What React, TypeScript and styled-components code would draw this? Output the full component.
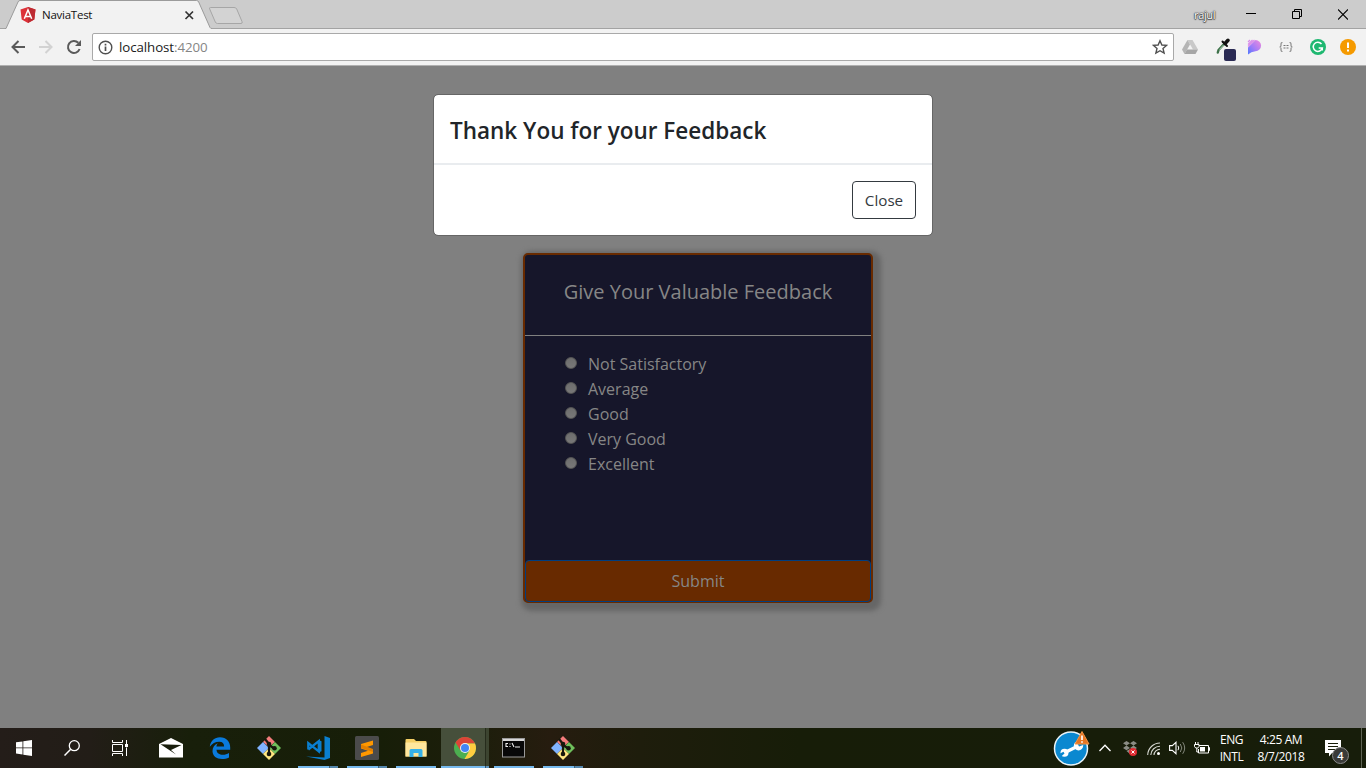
import React from 'react';
import styled, { createGlobalStyle } from 'styled-components';

const GlobalStyle = createGlobalStyle`
  * { box-sizing: border-box; }
  body { margin: 0; overflow: hidden; font-family: "Open Sans", "Noto Sans", sans-serif; }
`;

const Screen = styled.div`
  width: 1366px;
  height: 768px;
  display: flex;
  flex-direction: column;
  overflow: hidden;
`;

/* ---------- browser chrome ---------- */
const TabStrip = styled.div`
  height: 29px;
  flex: none;
  display: flex;
  background: #cccccc;
  box-shadow: inset 0 -1px #a3a3a3;
`;
const Tab = styled.div`
  position: relative;
  width: 206px;
  height: 29px;
  margin-left: 5px;
  padding-left: 15px;
  display: flex;
  align-items: center;
`;
const TabShape = styled.svg`
  position: absolute;
  left: 0;
  top: 0;
`;
const TabIcon = styled.svg`
  position: relative;
  flex: none;
`;
const TabTitle = styled.span`
  position: relative;
  width: 142px;
  margin-left: 6px;
  font-size: 11.5px;
  line-height: 29px;
  letter-spacing: -0.25px;
  color: #111;
`;
const NewTab = styled.svg`
  flex: none;
  margin: 6px 0 0 -3px;
`;
const WindowControls = styled.div`
  margin-left: auto;
  display: flex;
  align-items: center;
  height: 28px;
`;
const UserName = styled.span`
  width: 24px;
  margin-right: 10px;
  font-size: 11px;
  letter-spacing: -0.35px;
  color: #fff;
  text-shadow: 0 0 1px #333, 0 0 1px #333, 0 0 2px #444, 0 1px 1px #555;
`;
const ControlButton = styled.span`
  width: 46px;
  height: 28px;
  display: flex;
  align-items: center;
  justify-content: center;
`;
const Toolbar = styled.div`
  height: 37px;
  flex: none;
  display: flex;
  align-items: center;
  padding: 0 0 0 4px;
  background: #f2f2f2;
  border-bottom: 1px solid #b0b0b0;
`;
const NavButton = styled.span`
  width: 28px;
  flex: none;
  display: flex;
  justify-content: center;
`;
const AddressBar = styled.div`
  width: 1082px;
  height: 28px;
  flex: none;
  margin-left: 4px;
  padding: 0 5px;
  display: flex;
  align-items: center;
  background: #fff;
  border: 1px solid #a9a9a9;
  border-radius: 2px;
`;
const Url = styled.span`
  flex: 1;
  margin-left: 6px;
  font-size: 13.3px;
  letter-spacing: -0.08px;
  line-height: 26px;
  color: #1b1b1b;
`;
const Port = styled.span`
  color: #858585;
`;
const Extensions = styled.div`
  display: flex;
  flex: none;
`;
const Extension = styled.span<{ $w?: number }>`
  width: ${(p) => p.$w ?? 32}px;
  height: 26px;
  flex: none;
  display: flex;
  align-items: center;
  justify-content: center;
`;

/* ---------- page ---------- */
const Page = styled.main`
  position: relative;
  height: 662px;
  flex: none;
  padding: 187px 0 0 523px;
  background: #808080;
`;
const Card = styled.section`
  width: 350px;
  height: 350px;
  display: flex;
  flex-direction: column;
  background: #16162a;
  border: 2px solid #682a00;
  border-radius: 5px;
  box-shadow: 3px 3px 5px 5px #666;
  color: #868686;
`;
const CardTitle = styled.h2`
  height: 81px;
  margin: 0;
  padding-top: 22px;
  font-size: 20px;
  font-weight: 400;
  line-height: 30px;
  text-align: center;
  border-bottom: 1px solid #808080;
`;
const Options = styled.div`
  flex: 1;
  padding: 16px 0 0 40px;
`;
const Option = styled.label`
  display: flex;
  align-items: center;
  height: 25px;
  font-size: 16px;
  line-height: 25px;
`;
const Radio = styled.span`
  width: 12px;
  height: 12px;
  margin: 0 11px 3px 0;
  border-radius: 50%;
  border: 1px solid #555;
  background: linear-gradient(#6d6d6d, #787878);
`;
const Submit = styled.button`
  height: 42px;
  flex: none;
  margin-bottom: -1px;
  padding: 0;
  border: 1px solid #003e80;
  border-radius: 4px;
  background: #682a00;
  color: #868686;
  font: 400 16px/40px "Open Sans", sans-serif;
`;
const Modal = styled.div`
  position: absolute;
  left: 433px;
  top: 28px;
  width: 500px;
  height: 142px;
  border: 1px solid #666;
  border-radius: 5px;
  background: #fff;
  background-clip: padding-box;
`;
const ModalHeader = styled.header`
  height: 69px;
  padding: 17px 16px 15px;
  border-bottom: 1px solid #e9ecef;
`;
const ModalTitle = styled.h4`
  margin: 0;
  font-size: 22.5px;
  line-height: 37px;
  font-weight: 600;
  color: #212529;
  white-space: nowrap;
`;
const ModalFooter = styled.footer`
  height: 71px;
  padding: 16px;
  display: flex;
  justify-content: flex-end;
  border-top: 1px solid #e9ecef;
`;
const CloseButton = styled.button`
  width: 64px;
  height: 38px;
  padding: 0;
  border: 1px solid #343a40;
  border-radius: 4px;
  background: #fff;
  color: #343a40;
  font: 400 15.2px/36px "Open Sans", sans-serif;
`;

/* ---------- taskbar ---------- */
const Taskbar = styled.footer`
  height: 40px;
  flex: none;
  display: flex;
  background: linear-gradient(90deg, #241d19 0, #221d17 90px, #181f0a 190px, #171e08 380px, #1d1e0b 480px, #261c0f 550px, #1e1d0c 640px, #171d08 800px, #171d0a 1366px);
`;
const TaskSlot = styled.div<{ $w?: number; $active?: boolean }>`
  width: ${(p) => p.$w ?? 49}px;
  height: 40px;
  display: flex;
  flex-direction: column;
  align-items: center;
  justify-content: space-between;
  background: ${(p) => (p.$active ? 'linear-gradient(90deg, transparent 1px, #464f3b 1px, #464f3b 45px, #262c1c 45px, #262c1c 46px, #3c4430 46px)' : 'none')};
`;
const TaskIcon = styled.span`
  height: 38px;
  padding-top: 2px;
  display: flex;
  align-items: center;
  justify-content: center;
`;
const Running = styled.span<{ $split?: boolean; $wide?: boolean }>`
  width: ${(p) => (p.$wide ? 49 : 40)}px;
  height: 2px;
  background: ${(p) =>
    p.$wide
      ? 'linear-gradient(90deg, transparent 1px, #76b9ed 1px, #76b9ed 45px, #35556c 45px, #35556c 46px, #5f95bf 46px)'
      : p.$split
        ? 'linear-gradient(90deg, #76b9ed 31px, #3d6077 31px, #3d6077 32px, #5587ad 32px)'
        : '#76b9ed'};
`;
const PinnedApps = styled.div`
  display: flex;
  margin-left: 2px;
`;
const Tray = styled.div`
  margin-left: auto;
  display: flex;
  align-items: center;
  color: #fff;
`;
const TrayIcon = styled.span<{ $w: number }>`
  width: ${(p) => p.$w}px;
  height: 40px;
  display: flex;
  align-items: center;
  justify-content: center;
`;
const TrayText = styled.div<{ $w: number; $ls: number }>`
  width: ${(p) => p.$w}px;
  font-size: 12px;
  line-height: 17px;
  padding-bottom: 1px;
  text-align: center;
  white-space: nowrap;
  letter-spacing: ${(p) => p.$ls}px;
`;
const ShowDesktop = styled.span`
  width: 5px;
  height: 40px;
  border-left: 1px solid #5e6353;
`;
const Notifications = styled.div`
  position: relative;
  width: 24px;
  height: 40px;
  margin: 0 12px 0 10px;
  padding-top: 12px;
`;
const Badge = styled.span`
  position: absolute;
  left: 7px;
  top: 19px;
  width: 17px;
  height: 17px;
  border: 1px solid #8b8b8b;
  border-radius: 50%;
  background: #3a3b38;
  font-size: 11px;
  line-height: 15px;
  font-weight: 600;
  text-align: center;
`;

const GitIcon = () => (
  <svg width="26" height="26" viewBox="0 0 26 26">
    <path d="M13 1l6 6-6 5-6-5z" fill="#f47c7c" />
    <path d="M7 7l6 6-6 6-6-6z" fill="#80b3ff" />
    <path d="M19 7l6 6-6 6-6-6z" fill="#6fc05c" />
    <path d="M13 13l6 6-6 6-6-6z" fill="#ffe680" />
    <path d="M9 4l4 5v11M13 10l6 4" stroke="#17170d" strokeWidth="2.2" fill="none" />
    <circle cx="13" cy="9" r="2.3" fill="#17170d" />
    <circle cx="13" cy="19" r="2.3" fill="#17170d" />
    <circle cx="18.5" cy="13.3" r="2.3" fill="#17170d" />
  </svg>
);

const options = ['Not Satisfactory', 'Average', 'Good', 'Very Good', 'Excellent'];

export default function App() {
  return (
    <Screen>
      <GlobalStyle />
      <TabStrip>
        <Tab>
          <TabShape width="208" height="29">
            <path d="M0 29L1 28.5 13 2Q13.6.5 15 .5H191.5Q193 .5 193.700 2L205 27.500Q205.500 28.500 207 28.500V29Z" fill="#f2f2f2" />
            <path d="M0 28.500H1L13 2Q13.600.5 15 .5H191.500Q193 .5 193.700 2L205 27.500Q205.500 28.500 207 28.500" fill="none" stroke="#9b9b9b" />
          </TabShape>
          <TabIcon width="16" height="18" viewBox="0 0 16 18">
            <path d="M8 1l7.500 2.600-1.200 10L8 17l-6.300-3.400-1.200-10z" fill="#dd3138" />
            <path d="M8 1l7.500 2.600-1.200 10L8 17z" fill="#bd2a31" />
            <path d="M4.300 12.800L8 4l3.700 8.800M5.700 10.500h4.600" fill="none" stroke="#fff" strokeWidth="1.500" />
          </TabIcon>
          <TabTitle>NaviaTest</TabTitle>
          <TabIcon width="10" height="10" viewBox="0 0 10 10">
            <path d="M1.500 1.500l7.500 7.500M9 1.500L1.500 9" stroke="#333" strokeWidth="1.700" />
          </TabIcon>
        </Tab>
        <NewTab width="36" height="20">
          <path d="M1.700 3Q1 1.500 2.500 1.500H26Q28 1.500 28.700 3L34 15.500Q34.800 17.500 33 17.500H9.500Q8 17.500 7.300 16Z" fill="#d3d3d3" stroke="#a6a6a6" />
        </NewTab>
        <WindowControls>
          <UserName>rajul</UserName>
          <ControlButton>
            <svg width="10" height="10"><path d="M0 4.500h10" stroke="#000" /></svg>
          </ControlButton>
          <ControlButton>
            <svg width="10" height="10"><path d="M.5 2.500h7v7h-7zM2.500 2.500v-2h7v7h-2" fill="none" stroke="#000" /></svg>
          </ControlButton>
          <ControlButton>
            <svg width="10" height="11"><path d="M0 .5l10 10M10 .5l-10 10" stroke="#000" strokeWidth="1.100" /></svg>
          </ControlButton>
        </WindowControls>
      </TabStrip>

      <Toolbar>
        <NavButton>
          <svg width="14" height="14" viewBox="0 0 14 14"><path d="M14 7H1.500M7.500 1L1.500 7l6 6" fill="none" stroke="#5a5a5a" strokeWidth="2" /></svg>
        </NavButton>
        <NavButton>
          <svg width="14" height="14" viewBox="0 0 14 14"><path d="M0 7h12.500M6.500 1l6 6-6 6" fill="none" stroke="#d2d2d2" strokeWidth="2" /></svg>
        </NavButton>
        <NavButton>
          <svg width="16" height="16" viewBox="0 0 16 16">
            <path d="M13.600 10A6 6 0 1 1 12.300 3.800" fill="none" stroke="#5a5a5a" strokeWidth="2" />
            <path d="M15 1v6H9z" fill="#5a5a5a" />
          </svg>
        </NavButton>
        <AddressBar>
          <svg width="15" height="15" viewBox="0 0 15 15">
            <circle cx="7.500" cy="7.500" r="6.300" fill="none" stroke="#505050" strokeWidth="1.400" />
            <path d="M7.500 6.500V11M7.500 3.700v1.700" stroke="#505050" strokeWidth="1.700" />
          </svg>
          <Url>localhost<Port>:4200</Port></Url>
          <svg width="16" height="16" viewBox="0 0 16 16">
            <path d="M8 1.700l1.900 4.300 4.600.4-3.500 3.100 1.100 4.600L8 11.700l-4.100 2.400L5 9.500 1.500 6.400 6.100 6z" fill="none" stroke="#505050" strokeWidth="1.400" />
          </svg>
        </AddressBar>
        <Extensions>
          <Extension>
            <svg width="16" height="14" viewBox="0 0 16 14">
              <path d="M5.500 0h5L16 9.500h-5z" fill="#c9c9c9" />
              <path d="M5.500 0L0 9.500 2.500 14 8 4.500z" fill="#b5b5b5" />
              <path d="M5 9.500h11L13.500 14h-11z" fill="#a6a6a6" />
            </svg>
          </Extension>
          <Extension>
            <svg width="28" height="28" viewBox="0 0 28 28">
              <path d="M9.800 19.500L10.500 17 16.500 10.500" stroke="#3d7149" strokeWidth="2.400" strokeLinecap="round" fill="none" />
              <path d="M11.500 16.500L16 11.500" stroke="#a9cfae" strokeWidth=".9" />
              <path d="M14.500 8.500l4.500 4.500" stroke="#111" strokeWidth="2" strokeLinecap="round" />
              <path d="M17 10.500L20 7.300" stroke="#111" strokeWidth="3.600" strokeLinecap="round" />
              <rect x="16" y="16" width="12" height="12" rx="2" fill="#2b2b54" />
            </svg>
          </Extension>
          <Extension>
            <svg width="15" height="16" viewBox="0 0 15 16">
              <defs><linearGradient id="violet" x1="0" y1="1" x2="1" y2="0"><stop stopColor="#4f79ff" /><stop offset=".45" stopColor="#a47cf7" /><stop offset="1" stopColor="#f18bdc" /></linearGradient></defs>
              <path d="M1 8.500L8.500 1A5.600 5.600 0 0 1 8.500 12.200Q4 12.500 1 15.500z" fill="url(#violet)" />
              <path d="M1 3L3 1M1 5.500L5.500 1M1 7.500L7.500 1" stroke="#d98bea" strokeWidth="1.200" />
            </svg>
          </Extension>
          <Extension>
            <svg width="14" height="10" viewBox="0 0 14 10">
              <path d="M3.500.5Q2 .5 2 2v1.500Q2 5 .5 5 2 5 2 6.500V8Q2 9.500 3.500 9.500M10.500.5Q12 .5 12 2v1.500Q12 5 13.500 5 12 5 12 6.500V8Q12 9.500 10.500 9.500" fill="none" stroke="#8b8b8b" strokeWidth="1.200" />
              <path d="M4.500 3.500h2M7.500 3.500h2M4.500 6h2M7.500 6h2" stroke="#777" strokeWidth="1.200" />
            </svg>
          </Extension>
          <Extension>
            <svg width="16" height="16" viewBox="0 0 16 16">
              <circle cx="8" cy="8" r="8" fill="#1fb871" />
              <path d="M11.500 5A4.600 4.600 0 1 0 12.300 9H8.700M12.300 8.500v3" fill="none" stroke="#fff" strokeWidth="1.500" />
            </svg>
          </Extension>
          <Extension $w={28}>
            <svg width="16" height="16" viewBox="0 0 16 16">
              <circle cx="8" cy="8" r="8" fill="#f59a00" />
              <path d="M8 3.500v5.500M8 10.500v2" stroke="#fff" strokeWidth="2" />
            </svg>
          </Extension>
        </Extensions>
      </Toolbar>

      <Page>
        <Card>
          <CardTitle>Give Your Valuable Feedback</CardTitle>
          <Options>
            {options.map((o) => (
              <Option key={o}><Radio />{o}</Option>
            ))}
          </Options>
          <Submit>Submit</Submit>
        </Card>
        <Modal>
          <ModalHeader><ModalTitle>Thank You for your Feedback</ModalTitle></ModalHeader>
          <ModalFooter><CloseButton>Close</CloseButton></ModalFooter>
        </Modal>
      </Page>

      <Taskbar>
        <TaskSlot $w={48}>
          <TaskIcon>
            <svg width="16" height="16" viewBox="0 0 16 16"><path d="M0 2.300L6.500 1.400v6.100H0zM7.300 1.300L16 0v7.500H7.300zM0 8.300h6.500v6.200L0 13.600zM7.300 8.300H16V16l-8.700-1.300z" fill="#fff" /></svg>
          </TaskIcon>
        </TaskSlot>
        <TaskSlot $w={48}>
          <TaskIcon>
            <svg width="16" height="16" viewBox="0 0 16 16"><circle cx="10.300" cy="5.700" r="5" fill="none" stroke="#fff" strokeWidth="1.300" /><path d="M6.700 9.300L.5 15.500" stroke="#fff" strokeWidth="1.500" /></svg>
          </TaskIcon>
        </TaskSlot>
        <TaskSlot $w={48}>
          <TaskIcon>
            <svg width="16" height="16" viewBox="0 0 16 16">
              <path d="M.5 0v2.500h10V0M.5 4.500h10v7H.5zM.5 16v-2.500h10V16M14.500 0v4M14.500 7.500V16" fill="none" stroke="#fff" />
              <rect x="13" y="4" width="3" height="3" fill="#fff" />
            </svg>
          </TaskIcon>
        </TaskSlot>
        <PinnedApps>
          <TaskSlot>
            <TaskIcon>
              <svg width="24" height="20" viewBox="0 0 24 20"><path d="M0 6L12 0l12 6v13.500H0z" fill="#fff" /><path d="M1.500 6.300L22.500 7 12 12l5 4.500z" fill="#181d0c" /></svg>
            </TaskIcon>
          </TaskSlot>
          <TaskSlot>
            <TaskIcon>
              <svg width="22" height="22" viewBox="0 0 22 22">
                <path d="M.8 9.700C1.500 4 5.500.3 11 .3c6.400 0 10.200 4.600 10.200 10v2.500H7.500c.2 3.600 3 5 6.300 5 2.400 0 4.300-.6 6.200-1.800v4.500c-2 1.100-4.500 1.500-7 1.500-5.500 0-9.500-3-9.500-8 0-3.600 2-6.300 5.300-7.700-.9 1-1.300 2-1.400 3.100h7.700c0-2.800-1.500-4.600-4.800-4.600-3.900 0-7.400 2-9.500 4.900z" fill="#0a7adb" />
              </svg>
            </TaskIcon>
          </TaskSlot>
          <TaskSlot><TaskIcon><GitIcon /></TaskIcon></TaskSlot>
          <TaskSlot>
            <TaskIcon>
              <svg width="24" height="24" viewBox="0 0 24 24">
                <path d="M18.500 0L24 2v20l-5.500 2L0 20.500l18.500 1z" fill="#0a7fd0" />
                <path d="M2.300 13.500V7l10.500 8.300V5.200L2.300 13.500" fill="none" stroke="#0a7fd0" strokeWidth="2.300" />
                <path d="M12.500 4l3 1.200v10l-3 1.200z" fill="#0a7fd0" />
              </svg>
            </TaskIcon>
            <Running $split />
          </TaskSlot>
          <TaskSlot>
            <TaskIcon>
              <svg width="24" height="24" viewBox="0 0 24 24">
                <rect width="24" height="24" rx="1.500" fill="#4b4b4b" />
                <path d="M18 4.500v4.500l-7 2.200 7 2.300v4L6 21v-4l7-2.200-7-2.300V8z" fill="#ff9800" />
                <path d="M6 8.500l12 4.500v3L6 12z" fill="#e27f00" />
              </svg>
            </TaskIcon>
            <Running $split />
          </TaskSlot>
          <TaskSlot>
            <TaskIcon>
              <svg width="22" height="20" viewBox="0 0 22 20">
                <path d="M.5 2Q.5 1 1.500 1H9l2 2h9.500q1 0 1 1v14.500H.5z" fill="#f5cf66" />
                <path d="M.5 4.500h21v14H.5z" fill="#ffe79d" />
                <path d="M4.500 19v-6.500q0-1.500 1.500-1.500h10q1.500 0 1.500 1.500V19h-4v-4h-5v4z" fill="#36b1e8" />
              </svg>
            </TaskIcon>
            <Running />
          </TaskSlot>
          <TaskSlot $active>
            <TaskIcon>
              <svg width="22" height="22" viewBox="0 0 22 22">
                <circle cx="11" cy="11" r="11" fill="#4caf50" />
                <path d="M1.500 5.500A11 11 0 0 1 20.500 5.500L21 6.500H11L6.500 13.500z" fill="#db4437" />
                <path d="M11 6.500h10A11 11 0 0 1 10.500 22l5-8.500z" fill="#ffcd40" />
                <circle cx="11" cy="11" r="5" fill="#f1f1f1" />
                <circle cx="11" cy="11" r="4" fill="#4285f4" />
              </svg>
            </TaskIcon>
            <Running $wide />
          </TaskSlot>
          <TaskSlot>
            <TaskIcon>
              <svg width="24" height="20" viewBox="0 0 24 20">
                <rect x=".5" y=".5" width="22" height="18.500" fill="#080808" stroke="#9a9a9a" />
                <path d="M1 2h21" stroke="#d7d7d7" strokeWidth="2" />
                <path d="M6 5.500H4v3h2M8 5.500v1M8 8v1M10 5l2 4M13 9h5" fill="none" stroke="#eee" strokeWidth="1.100" />
              </svg>
            </TaskIcon>
            <Running />
          </TaskSlot>
          <TaskSlot><TaskIcon><GitIcon /></TaskIcon><Running $split /></TaskSlot>
        </PinnedApps>

        <Tray>
          <TrayIcon $w={40}>
            <svg width="38" height="38" viewBox="0 0 38 38">
              <circle cx="18" cy="19.500" r="16.500" fill="#0b88d0" stroke="#e8f3f8" strokeWidth="1.500" />
              <path d="M12 23.500L25 17" stroke="#fff" strokeWidth="3.200" />
              <circle cx="11.500" cy="23.700" r="4" fill="#fff" />
              <circle cx="25.500" cy="16.800" r="4.700" fill="#fff" />
              <path d="M11.500 24.500l-1-1.800-4 2 1.500 3z" fill="#0b88d0" />
              <path d="M26 17.500l-1.500-3 5-3.500 2 4.500z" fill="#0b88d0" />
              <path d="M29 2.500l7 12.500h-14z" fill="#e77522" stroke="#f19345" />
              <path d="M29 6.500v4.500M29 12.300v1.500" stroke="#fff" strokeWidth="1.700" />
            </svg>
          </TrayIcon>
          <TrayIcon $w={26}>
            <svg width="12" height="8"><path d="M.5 7L6 1.200 11.500 7" fill="none" stroke="#fff" strokeWidth="1.300" /></svg>
          </TrayIcon>
          <TrayIcon $w={23}>
            <svg width="14" height="15" viewBox="0 0 14 15">
              <path d="M3.500 0L7 2.300 3.500 4.600 0 2.300zM10.500 0L14 2.300l-3.500 2.300L7 2.300zM3.500 4.600L7 6.900 3.500 9.200 0 6.900zM10.500 4.600L14 6.900l-3.500 2.300L7 6.900zM3.500 10L7 8l2 2-2 3z" fill="#8a8c84" />
              <circle cx="10" cy="11" r="4" fill="#e02b32" /><path d="M8.500 9.500l3 3M11.500 9.500l-3 3" stroke="#fff" />
            </svg>
          </TrayIcon>
          <TrayIcon $w={25}>
            <svg width="13" height="13" viewBox="0 0 13 13">
              <path d="M.7 13A12.300 12.300 0 0 1 13 1M3.800 13A9.200 9.200 0 0 1 13 4.200M7 13A6 6 0 0 1 13 7.300" fill="none" stroke="#d7d9d3" strokeWidth="1.100" />
              <circle cx="11.500" cy="11.500" r="1.500" fill="#fff" />
            </svg>
          </TrayIcon>
          <TrayIcon $w={22}>
            <svg width="17" height="14" viewBox="0 0 17 14">
              <path d="M.6 4.600h2.700L7 1.300v11.400L3.300 9.400H.6z" fill="none" stroke="#fff" strokeWidth="1.100" />
              <path d="M9 4.800q1.500 2.200 0 4.400" fill="none" stroke="#fff" />
              <path d="M11.300 3q3 4 0 8M13.700 1.200q4 5.800 0 11.600" fill="none" stroke="#85897d" />
            </svg>
          </TrayIcon>
          <TrayIcon $w={28}>
            <svg width="16" height="12" viewBox="0 0 16 12">
              <path d="M5 3.500h9.500v7.500h-10V7M14.500 5.500h1v3h-1" fill="none" stroke="#fff" />
              <rect x="6" y="5" width="5" height="4.500" fill="#fff" />
              <path d="M1.500 0v2M4 0v2M.5 2.500h4.500v2L3.800 6H1.700L.5 4.500zM2.800 6v4H4.500" fill="none" stroke="#fff" />
            </svg>
          </TrayIcon>
          <TrayText $w={31} $ls={-0.4}>ENG<br />INTL</TrayText>
          <TrayText $w={68} $ls={-0.4}>4:25 AM<br />8/7/2018</TrayText>
          <Notifications>
            <svg width="16" height="17" viewBox="0 0 16 17"><path d="M0 0h16v13H7l-3 3.500V13H0z" fill="#fff" /><path d="M3 3.500h10M3 6.500h10M3 9.500h7" stroke="#181d0a" /></svg>
            <Badge>4</Badge>
          </Notifications>
          <ShowDesktop />
        </Tray>
      </Taskbar>
    </Screen>
  );
}
